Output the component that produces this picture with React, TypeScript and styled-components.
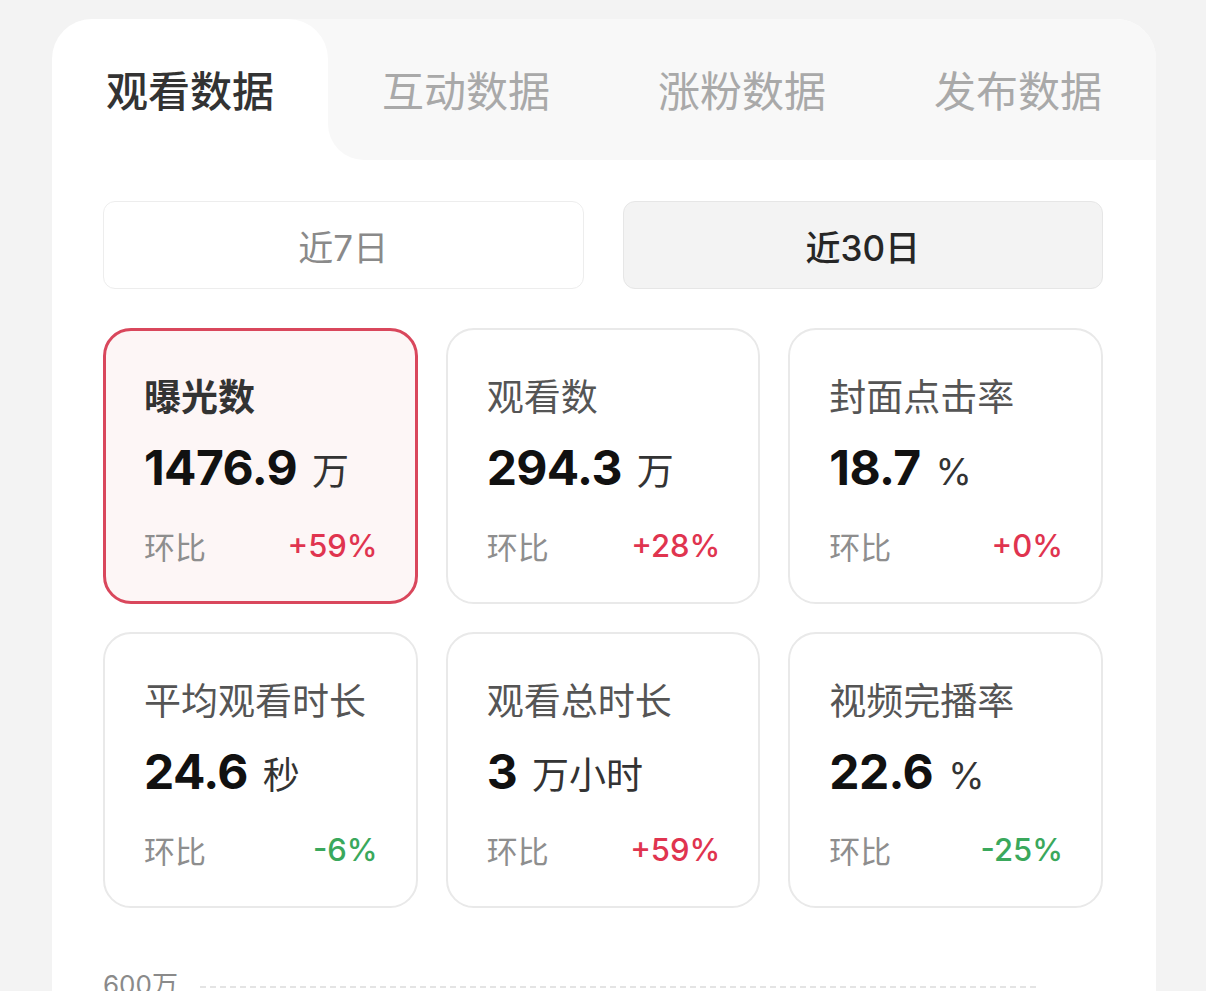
import React, { useState } from 'react'
import styled, { createGlobalStyle } from 'styled-components'

const GlobalStyle = createGlobalStyle`
  html, body {
    margin: 0;
    padding: 0;
    background: #f3f3f3;
    height: 991px;
    overflow: hidden;
  }
  body {
    font-family: Inter, "Noto Sans CJK SC", sans-serif;
  }
`

const Page = styled.div`
  padding: 19px 50px 0 52px;
`

const Panel = styled.div`
  width: 1104px;
  height: 972px;
  background: #fff;
  border-radius: 40px 40px 0 0;
  overflow: hidden;
`

const TabBar = styled.div`
  display: grid;
  grid-template-columns: 276px 1fr;
  height: 141px;
  background: linear-gradient(#f8f8f8 50%, #fff 50%);
`

const ActiveTab = styled.div`
  display: flex;
  align-items: center;
  justify-content: center;
  background: #fff;
  border-radius: 40px 40px 0 0;
  font-size: 42px;
  font-weight: 500;
  color: #333;
  padding-bottom: 2px;
`

const OtherTabs = styled.div`
  display: grid;
  grid-template-columns: repeat(3, 1fr);
  background: #f8f8f8;
  border-radius: 0 40px 0 36px;
`

const Tab = styled.div`
  display: flex;
  align-items: center;
  justify-content: center;
  font-size: 42px;
  color: #a9a9a9;
  padding-bottom: 2px;
`

const Content = styled.div`
  padding: 41px 53px 0 51px;
`

const RangeRow = styled.div`
  display: grid;
  grid-template-columns: 1fr 1fr;
  gap: 39px;
`

const RangeButton = styled.div<{ $active?: boolean }>`
  height: 88px;
  box-sizing: border-box;
  display: flex;
  align-items: center;
  justify-content: center;
  border-radius: 12px;
  border: 1px solid ${({ $active }) => ($active ? '#e6e6e6' : '#ededed')};
  background: ${({ $active }) => ($active ? '#f3f3f3' : '#fff')};
  color: ${({ $active }) => ($active ? '#262626' : '#8a8a8a')};
  font-size: 35px;
  font-weight: ${({ $active }) => ($active ? 500 : 400)};
`

const CardGrid = styled.div`
  display: grid;
  grid-template-columns: repeat(3, 1fr);
  grid-auto-rows: 276px;
  gap: 28px;
  margin-top: 39px;
`

const Card = styled.div<{ $selected?: boolean }>`
  box-sizing: border-box;
  border-radius: 28px;
  border: ${({ $selected }) => ($selected ? '3px solid #d9475c' : '2px solid #e9e9e9')};
  background: ${({ $selected }) => ($selected ? '#fdf6f6' : '#fff')};
  padding: ${({ $selected }) => ($selected ? '47px 37px 0 38px' : '48px 38px 0 39px')};
  display: flex;
  flex-direction: column;
`

const CardTitle = styled.div<{ $selected?: boolean }>`
  font-size: 37px;
  line-height: 40px;
  color: ${({ $selected }) => ($selected ? '#333' : '#555')};
  font-weight: ${({ $selected }) => ($selected ? 700 : 400)};
  white-space: nowrap;
`

const ValueRow = styled.div`
  display: flex;
  align-items: baseline;
  gap: 15px;
  margin-top: 20px;
  height: 60px;
`

const Value = styled.span`
  font-size: 48px;
  line-height: 60px;
  font-weight: 700;
  color: #111;
  letter-spacing: -0.6px;
`

const Unit = styled.span`
  font-size: 37px;
  color: #333;
`

const CompareRow = styled.div`
  display: flex;
  justify-content: space-between;
  align-items: center;
  margin-top: 27px;
  height: 40px;
`

const CompareLabel = styled.span`
  font-size: 31px;
  color: #8e8e8e;
`

const Change = styled.span<{ $up: boolean }>`
  font-size: 31px;
  font-weight: 500;
  color: ${({ $up }) => ($up ? '#e0344f' : '#3aa85c')};
`

const ChartHead = styled.div`
  display: flex;
  align-items: flex-start;
  gap: 22px;
  margin-top: 62px;
`

const AxisLabel = styled.span`
  font-size: 26px;
  line-height: 30px;
  color: #8a8a8a;
  white-space: nowrap;
`

const GridLine = styled.div`
  width: 836px;
  margin-top: 16px;
  border-top: 2px dashed #e4e4e4;
`

const tabs = ['观看数据', '互动数据', '涨粉数据', '发布数据']

const metrics = [
  { title: '曝光数', value: '1476.9', unit: '万', change: '+59%' },
  { title: '观看数', value: '294.3', unit: '万', change: '+28%' },
  { title: '封面点击率', value: '18.7', unit: '%', change: '+0%' },
  { title: '平均观看时长', value: '24.6', unit: '秒', change: '-6%' },
  { title: '观看总时长', value: '3', unit: '万小时', change: '+59%' },
  { title: '视频完播率', value: '22.6', unit: '%', change: '-25%' },
]

export default function App() {
  const [range, setRange] = useState(30)
  const [selected, setSelected] = useState(0)

  return (
    <Page>
      <GlobalStyle />
      <Panel>
        <TabBar>
          <ActiveTab>{tabs[0]}</ActiveTab>
          <OtherTabs>
            {tabs.slice(1).map((t) => (
              <Tab key={t}>{t}</Tab>
            ))}
          </OtherTabs>
        </TabBar>
        <Content>
          <RangeRow>
            <RangeButton $active={range === 7} onClick={() => setRange(7)}>
              近7日
            </RangeButton>
            <RangeButton $active={range === 30} onClick={() => setRange(30)}>
              近30日
            </RangeButton>
          </RangeRow>
          <CardGrid>
            {metrics.map((m, i) => (
              <Card key={m.title} $selected={selected === i} onClick={() => setSelected(i)}>
                <CardTitle $selected={selected === i}>{m.title}</CardTitle>
                <ValueRow>
                  <Value>{m.value}</Value>
                  <Unit>{m.unit}</Unit>
                </ValueRow>
                <CompareRow>
                  <CompareLabel>环比</CompareLabel>
                  <Change $up={m.change.startsWith('+')}>{m.change}</Change>
                </CompareRow>
              </Card>
            ))}
          </CardGrid>
          <ChartHead>
            <AxisLabel>600万</AxisLabel>
            <GridLine />
          </ChartHead>
        </Content>
      </Panel>
    </Page>
  )
}
